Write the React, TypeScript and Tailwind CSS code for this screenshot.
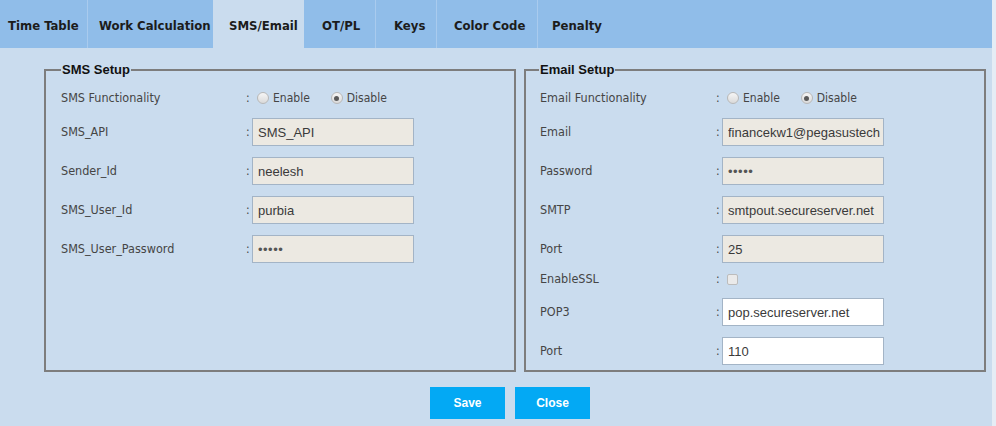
import React from "react";

const tabs = [
  { name: "Time Table", w: "w-[87px]", pl: "pl-[8px]", border: false },
  { name: "Work Calculation", w: "w-[126px]", pl: "pl-[11px]", border: true },
  { name: "SMS/Email", w: "w-[91px]", pl: "pl-[16px]", border: true, active: true },
  { name: "OT/PL", w: "w-[71px]", pl: "pl-[18px]", border: false },
  { name: "Keys", w: "w-[61px]", pl: "pl-[18px]", border: true },
  { name: "Color Code", w: "w-[101px]", pl: "pl-[17px]", border: true },
  { name: "Penalty", w: "w-[80px]", pl: "pl-[14px]", border: true },
];

function Radio({ checked }: { checked?: boolean }) {
  return (
    <span className="w-[12px] h-[12px] rounded-full border border-[#b8b8b8] bg-linear-to-b from-[#f6f6f6] to-[#dadada] flex items-center justify-center shrink-0">
      {checked && <span className="w-[5px] h-[5px] rounded-full bg-[#5a5a5a]" />}
    </span>
  );
}

function Colon() {
  return <span className="w-[6px] shrink-0 text-[12px]">:</span>;
}

function RadioRow({ label, labelW }: { label: string; labelW: string }) {
  return (
    <div className="flex items-center h-[28px]">
      <span className={`${labelW} shrink-0 text-[12.5px]`}>{label}</span>
      <Colon />
      <span className="ml-[5px]"><Radio /></span>
      <span className="ml-[4px]">Enable</span>
      <span className="ml-[21px]"><Radio checked /></span>
      <span className="ml-[4px]">Disable</span>
    </div>
  );
}

function InputRow({
  label,
  value,
  labelW,
  mt,
  white,
  password,
}: {
  label: string;
  value: string;
  labelW: string;
  mt: string;
  white?: boolean;
  password?: boolean;
}) {
  return (
    <div className={`flex items-center h-[28px] ${mt}`}>
      <span className={`${labelW} shrink-0 text-[12.5px]`}>{label}</span>
      <Colon />
      <input
        readOnly
        type={password ? "password" : "text"}
        defaultValue={value}
        className={`w-[162px] h-[28px] border border-[#a3b4c6] pl-[5px] pr-[2px] font-['Liberation_Sans',Arial,sans-serif] text-[13px] text-[#3a3a3a] outline-none ${
          white ? "bg-white" : "bg-[#ece9e2]"
        } ${password ? "text-[11px] tracking-[0.5px] text-[#555]" : ""}`}
      />
    </div>
  );
}

export default function App() {
  return (
    <div className="flex w-[996px] h-[426px] overflow-hidden font-['DejaVu_Sans_Condensed','DejaVu_Sans',sans-serif] font-stretch-condensed">
      <div className="w-[992px] h-full bg-[#cadcee] flex flex-col">
        {/* Tab bar */}
        <div className="h-[48px] bg-[#90bde9] flex shrink-0">
          {tabs.map((t) => (
            <div
              key={t.name}
              className={`${t.w} ${t.pl} h-full flex items-center pt-[4px] text-[13px] font-bold text-[#1c1c1c] whitespace-nowrap ${
                t.border ? "border-l border-[#a9cbee]" : ""
              } ${t.active ? "bg-[#cadcee] border-l-0" : ""}`}
            >
              {t.name}
            </div>
          ))}
        </div>

        {/* Content */}
        <div className="flex items-stretch gap-[8px] ml-[44px] mt-[14px] text-[12px] text-[#454545]">
          <fieldset className="w-[472px] border-2 border-[#7d7d7d] pl-[15px] pt-[7px] pb-[5px]">
            <legend className="px-[1px] font-['Liberation_Sans',Arial,sans-serif] font-bold text-[13px] leading-[15px] text-[#111]">
              SMS Setup
            </legend>
            <RadioRow label="SMS Functionality" labelW="w-[185px]" />
            <InputRow label="SMS_API" value="SMS_API" labelW="w-[185px]" mt="mt-[6px]" />
            <InputRow label="Sender_Id" value="neelesh" labelW="w-[185px]" mt="mt-[11px]" />
            <InputRow label="SMS_User_Id" value="purbia" labelW="w-[185px]" mt="mt-[11px]" />
            <InputRow label="SMS_User_Password" value="12345" password labelW="w-[185px]" mt="mt-[11px]" />
          </fieldset>

          <fieldset className="w-[462px] border-2 border-[#7d7d7d] pl-[14px] pt-[7px] pb-[5px]">
            <legend className="-ml-[1px] px-[1px] font-['Liberation_Sans',Arial,sans-serif] font-bold text-[13px] leading-[15px] text-[#111]">
              Email Setup
            </legend>
            <RadioRow label="Email Functionality" labelW="w-[176px]" />
            <InputRow label="Email" value="financekw1@pegasustech" labelW="w-[176px]" mt="mt-[6px]" />
            <InputRow label="Password" value="12345" password labelW="w-[176px]" mt="mt-[11px]" />
            <InputRow label="SMTP" value="smtpout.secureserver.net" labelW="w-[176px]" mt="mt-[11px]" />
            <InputRow label="Port" value="25" labelW="w-[176px]" mt="mt-[11px]" />
            <div className="flex items-center h-[16px] mt-[8px]">
              <span className="w-[176px] shrink-0 text-[12.5px]">EnableSSL</span>
              <Colon />
              <span className="ml-[5px] w-[11px] h-[11px] rounded-[2px] border border-[#bcbcbc] bg-[#eaeaea]" />
            </div>
            <InputRow label="POP3" value="pop.secureserver.net" white labelW="w-[176px]" mt="mt-[11px]" />
            <InputRow label="Port" value="110" white labelW="w-[176px]" mt="mt-[11px]" />
          </fieldset>
        </div>

        {/* Buttons */}
        <div className="flex gap-[10px] ml-[430px] mt-[15px]">
          <button className="w-[75px] h-[32px] bg-[#03a9f4] text-white font-bold text-[12px] font-['Liberation_Sans',Arial,sans-serif]">
            Save
          </button>
          <button className="w-[75px] h-[32px] bg-[#03a9f4] text-white font-bold text-[12px] font-['Liberation_Sans',Arial,sans-serif]">
            Close
          </button>
        </div>
      </div>
      <div className="flex-1 h-full bg-[#e5edf5]" />
    </div>
  );
}
